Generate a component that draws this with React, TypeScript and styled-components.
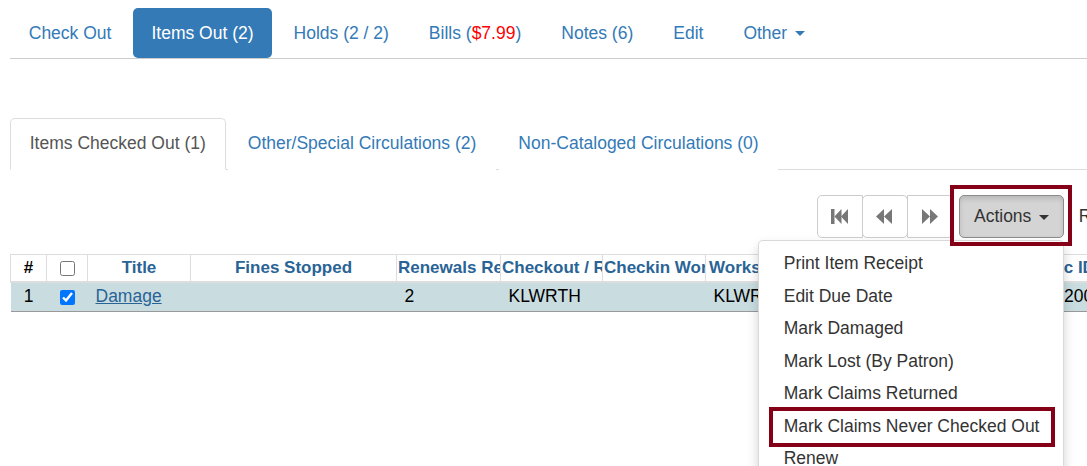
import React from 'react'
import styled, { createGlobalStyle } from 'styled-components'

const GlobalStyle = createGlobalStyle`
  body {
    margin: 0;
    padding: 0;
    background: #fff;
    font-family: 'Liberation Sans', Arial, sans-serif;
    font-size: 17.5px;
    line-height: 25px;
    color: #333;
  }
`

const LINK = '#337ab7'
const HEAD = '#2a6496'

const Frame = styled.div`
  width: 100vw;
  height: 100vh;
  overflow: hidden;
`

const Page = styled.div`
  width: 1146px;
  padding: 8px 0 0 10px;
`

const Pills = styled.ul`
  display: flex;
  list-style: none;
  margin: 0;
  padding: 0;
  border-bottom: 1px solid #ccc;
`

const Pill = styled.li<{ $active?: boolean }>`
  margin-right: 2.5px;
  padding: 12.5px 18.75px;
  border-radius: 5px;
  background: ${p => (p.$active ? '#337ab7' : 'transparent')};
  color: ${p => (p.$active ? '#fff' : LINK)};
  white-space: nowrap;
`

const Red = styled.span`
  color: #f00;
`

const Caret = styled.span`
  display: inline-block;
  width: 0;
  height: 0;
  margin-left: 2.5px;
  vertical-align: middle;
  border-top: 5px solid;
  border-left: 5px solid transparent;
  border-right: 5px solid transparent;
`

const Tabs = styled.ul`
  display: flex;
  list-style: none;
  margin: 59px 0 0;
  padding: 0;
  border-bottom: 1px solid #ddd;
`

const Tab = styled.li<{ $active?: boolean }>`
  margin: 0 2.5px -1px 0;
  padding: 12px 18.75px 13px;
  border: 1px solid ${p => (p.$active ? '#ddd' : 'transparent')};
  border-bottom-color: ${p => (p.$active ? '#fff' : 'transparent')};
  border-radius: 5px 5px 0 0;
  background: #fff;
  color: ${p => (p.$active ? '#555' : LINK)};
  white-space: nowrap;
`

const Toolbar = styled.div`
  display: flex;
  justify-content: flex-end;
  align-items: flex-start;
  margin-top: 25px;
`

const BtnGroup = styled.div`
  display: flex;
  & > button + button {
    margin-left: -1px;
  }
  & > button:first-child {
    border-radius: 5px 0 0 5px;
  }
  & > button:last-child {
    border-radius: 0 5px 5px 0;
  }
`

const Btn = styled.button<{ $pressed?: boolean }>`
  display: block;
  height: 42.5px;
  padding: 0 ${p => (p.$pressed ? '14px' : '15px')};
  font: inherit;
  line-height: 25px;
  color: #333;
  background: ${p => (p.$pressed ? '#d4d4d4' : '#fff')};
  border: 1px solid ${p => (p.$pressed ? '#8c8c8c' : '#ccc')};
  border-radius: 5px;
  box-shadow: ${p => (p.$pressed ? 'inset 0 3px 5px rgba(0,0,0,.125)' : 'none')};
  white-space: nowrap;
`

const IconBtn = styled(Btn)`
  display: flex;
  align-items: center;
  justify-content: center;
  width: 46px;
  padding: 0;
  color: #777;
`

const PlainBtn = styled(Btn)`
  border-color: transparent;
  padding-left: 14px;
`

const ActionsWrap = styled.div`
  position: relative;
  margin-left: 6px;
  &::after {
    content: '';
    position: absolute;
    top: -10px;
    left: -9px;
    right: -8px;
    bottom: -8px;
    border: 4px solid #850017;
    pointer-events: none;
    z-index: 1100;
  }
`

const Menu = styled.ul`
  position: absolute;
  top: calc(100% + 2.5px);
  right: 0;
  z-index: 1000;
  width: 306px;
  box-sizing: border-box;
  margin: 0;
  padding: 6.25px 0;
  list-style: none;
  background: #fff;
  border: 1px solid rgba(0, 0, 0, 0.15);
  border-radius: 5px;
  box-shadow: 0 6px 12px rgba(0, 0, 0, 0.175);
`

const MenuItem = styled.li<{ $marked?: boolean }>`
  position: relative;
  padding: 3.75px 25px;
  line-height: 25px;
  color: #333;
  white-space: nowrap;
  &::after {
    content: '';
    display: ${p => (p.$marked ? 'block' : 'none')};
    position: absolute;
    top: -3px;
    bottom: -5px;
    left: 10px;
    right: 8px;
    border: 4px solid #850017;
  }
`

const Table = styled.table`
  margin-top: 16px;
  width: 1160px;
  table-layout: fixed;
  border-collapse: collapse;
  border-top: 1px solid #ddd;
`

const Th = styled.th`
  height: 26px;
  padding: 0 1px;
  font-size: 17px;
  font-weight: bold;
  color: ${HEAD};
  text-align: center;
  white-space: nowrap;
  overflow: hidden;
  border: 1px solid #ddd;
  border-top: 0;
  border-bottom: 2px solid #ddd;
  &:first-child {
    color: #000;
  }
`

const Row = styled.tr`
  background: #c9dde1;
  border-bottom: 1px solid #999;
`

const Td = styled.td<{ $center?: boolean }>`
  height: 28px;
  padding: 0 8px;
  text-align: ${p => (p.$center ? 'center' : 'left')};
  white-space: nowrap;
  overflow: hidden;
  color: #000;
`

const Check = styled.input`
  width: 15px;
  height: 15px;
  margin: 0;
  vertical-align: middle;
`

const TitleLink = styled.a`
  color: ${HEAD};
  text-decoration: underline;
`

const FastBackward = () => (
  <svg width="18" height="15" viewBox="0 0 18 15" fill="currentColor">
    <rect x="0" y="0" width="3.5" height="15" />
    <polygon points="3.5,7.5 10.5,0 10.5,15" />
    <polygon points="10,7.5 17,0 17,15" />
  </svg>
)

const Backward = () => (
  <svg width="17" height="15" viewBox="0 0 17 15" fill="currentColor">
    <polygon points="0,7.5 8,0 8,15" />
    <polygon points="8,7.5 16,0 16,15" />
  </svg>
)

const Forward = () => (
  <svg width="17" height="15" viewBox="0 0 17 15" fill="currentColor">
    <polygon points="17,7.5 9,0 9,15" />
    <polygon points="9,7.5 1,0 1,15" />
  </svg>
)

const columns = [
  { label: '#', width: 36 },
  { label: 'cb', width: 41 },
  { label: 'Title', width: 103 },
  { label: 'Fines Stopped', width: 206 },
  { label: 'Renewals Remaining', width: 104 },
  { label: 'Checkout / Renewal Workstation', width: 102 },
  { label: 'Checkin Workstation', width: 103 },
  { label: 'Workstation', width: 105 },
  { label: 'Due Date', width: 120 },
  { label: 'Barcode', width: 106 },
  { label: 'Circ ID', width: 62 },
  { label: 'Call Number', width: 132 },
]

const menuItems = [
  'Print Item Receipt',
  'Edit Due Date',
  'Mark Damaged',
  'Mark Lost (By Patron)',
  'Mark Claims Returned',
  'Mark Claims Never Checked Out',
  'Renew',
  'Renew All',
]

const App = () => (
  <Frame>
    <GlobalStyle />
    <Page>
      <Pills>
        <Pill>Check Out</Pill>
        <Pill $active>Items Out (2)</Pill>
        <Pill>Holds (2 / 2)</Pill>
        <Pill>
          Bills (<Red>$7.99</Red>)
        </Pill>
        <Pill>Notes (6)</Pill>
        <Pill>Edit</Pill>
        <Pill>
          Other <Caret />
        </Pill>
      </Pills>

      <Tabs>
        <Tab $active>Items Checked Out (1)</Tab>
        <Tab>Other/Special Circulations (2)</Tab>
        <Tab>Non-Cataloged Circulations (0)</Tab>
      </Tabs>

      <Toolbar>
        <BtnGroup>
          <IconBtn><FastBackward /></IconBtn>
          <IconBtn><Backward /></IconBtn>
          <IconBtn><Forward /></IconBtn>
        </BtnGroup>
        <ActionsWrap>
          <Btn $pressed>
            Actions <Caret />
          </Btn>
          <Menu>
            {menuItems.map(item => (
              <MenuItem key={item} $marked={item === 'Mark Claims Never Checked Out'}>
                {item}
              </MenuItem>
            ))}
          </Menu>
        </ActionsWrap>
        <PlainBtn>Refresh</PlainBtn>
      </Toolbar>

      <Table>
        <colgroup>
          {columns.map(c => (
            <col key={c.label} style={{ width: c.width }} />
          ))}
        </colgroup>
        <thead>
          <tr>
            {columns.map(c => (
              <Th key={c.label}>{c.label === 'cb' ? <Check type="checkbox" readOnly /> : c.label}</Th>
            ))}
          </tr>
        </thead>
        <tbody>
          <Row>
            <Td $center>1</Td>
            <Td $center>
              <Check type="checkbox" checked readOnly />
            </Td>
            <Td>
              <TitleLink href="#">Damage</TitleLink>
            </Td>
            <Td />
            <Td>2</Td>
            <Td>KLWRTH</Td>
            <Td />
            <Td>KLWRTH</Td>
            <Td>2024-05-01</Td>
            <Td>33012000</Td>
            <Td>19200458</Td>
            <Td>FIC DAM</Td>
          </Row>
        </tbody>
      </Table>
    </Page>
  </Frame>
)

export default App
